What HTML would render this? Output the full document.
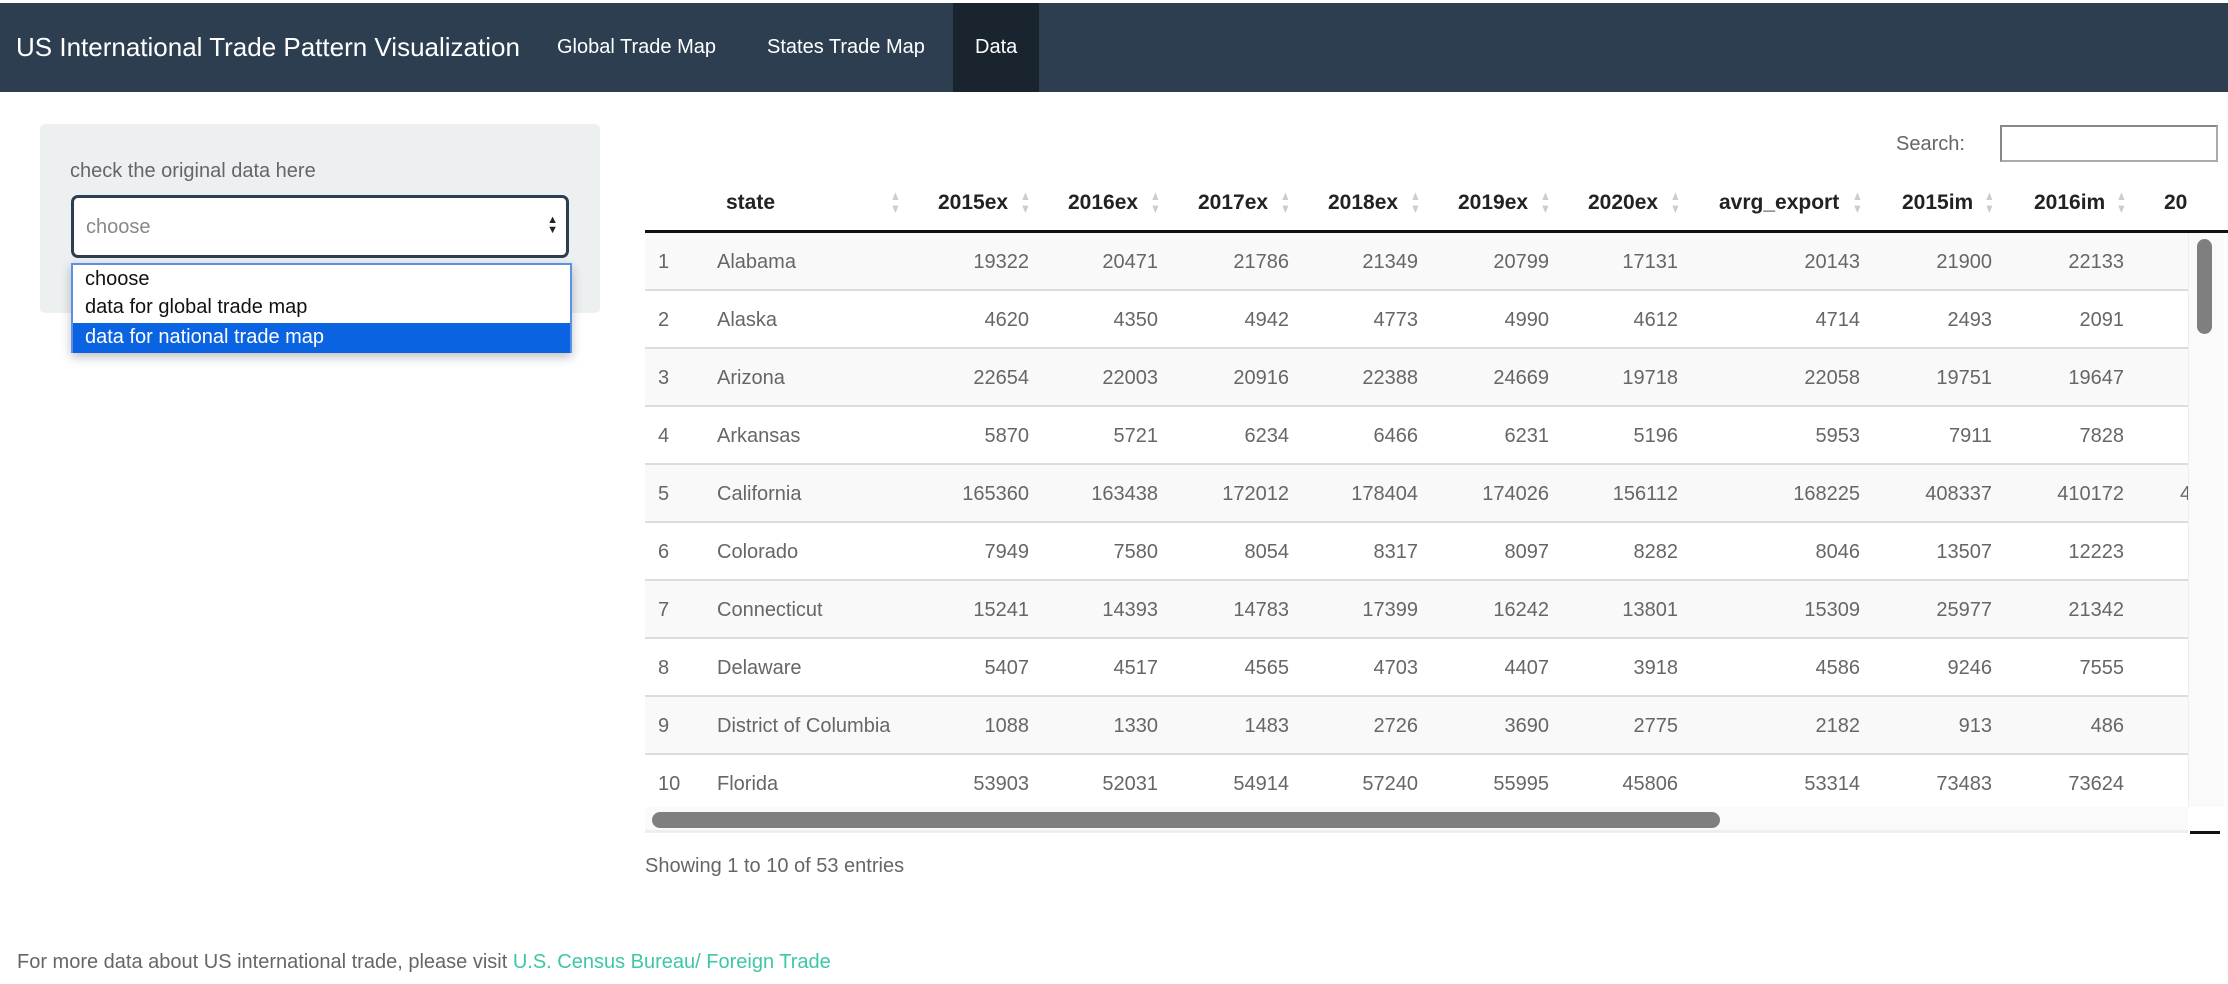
<!DOCTYPE html>
<html><head><meta charset="utf-8">
<style>
*{margin:0;padding:0;box-sizing:border-box}
body{width:2228px;height:984px;overflow:hidden;background:#fff;font-family:"Liberation Sans",sans-serif;color:#555;position:relative}
.nav{position:absolute;left:0;top:3px;width:2228px;height:89px;background:#2c3e50}
.nav span{position:absolute;top:0;line-height:89px;color:#fff}
.brand{left:16px;font-size:26px}
.nl{font-size:20px}
.act{background:#1a242f;padding:0 22px}
.well{position:absolute;left:40px;top:124px;width:560px;height:189px;background:#ecf0f1;border-radius:5px}
.lbl{position:absolute;left:70px;top:160px;font-size:20px;color:#666}
.sel{position:absolute;left:71px;top:195px;width:498px;height:63px;border:3px solid #2c3e50;border-radius:7px;background:#fff;font-size:20px;color:#888;padding:18px 0 0 12px}
.arr{position:absolute;right:8px;top:17px;font-size:11px;line-height:10px;color:#222}
.dd{position:absolute;left:71px;top:263px;width:501px;height:90px;border:2px solid #5c8fe6;background:#fff;box-shadow:0 4px 10px rgba(0,0,0,.25);font-size:20px;color:#111}
.dd div{height:28px;line-height:28px;padding-left:12px}
.dd .hl{background:#0a63e0;color:#fff;height:30px;margin-top:2px}
.search{position:absolute;left:1896px;top:133px;font-size:20px;color:#666}
.sinp{position:absolute;left:2000px;top:125px;width:218px;height:37px;border:2px solid #aaa;border-top-color:#888;border-left-color:#888;background:#fff}
.hdr{position:absolute;top:191px;font-size:21px;font-weight:bold;color:#222}
.sa{position:absolute;top:189px;font-size:13px;line-height:13px;color:#ccc;transform:scaleX(0.8)}
.hline{position:absolute;left:645px;top:230px;width:1583px;height:3px;background:#111}
.row{position:absolute;left:645px;width:1543px;height:58px;border-bottom:2px solid #ddd;font-size:20px;color:#666}
.row.o{background:#f9f9f9}
.row span{position:absolute;top:18px}
.r{text-align:right}
.vs{position:absolute;left:2188px;top:233px;width:36px;height:574px;background:#fafafa;border-left:1px solid #eee}
.vth{position:absolute;left:2197px;top:239px;width:15px;height:95px;background:#7f7f7f;border-radius:8px}
.hs{position:absolute;left:645px;top:807px;width:1543px;height:26px;background:#fafafa;border-bottom:3px solid #eee}
.hth{position:absolute;left:652px;top:812px;width:1068px;height:16px;background:#7f7f7f;border-radius:8px}
.info{position:absolute;left:645px;top:855px;font-size:20px;color:#666}
.foot{position:absolute;left:17px;top:951px;font-size:20px;color:#666}
.foot a{color:#3ec7a6;text-decoration:none}
</style></head><body>
<div class="nav">
<span class="brand">US International Trade Pattern Visualization</span>
<span class="nl" style="left:557px">Global Trade Map</span>
<span class="nl" style="left:767px">States Trade Map</span>
<span class="nl act" style="left:953px">Data</span>
</div>
<div class="well"></div>
<div class="lbl">check the original data here</div>
<div class="sel">choose<div class="arr">▲<br>▼</div></div>
<div class="dd"><div>choose</div><div>data for global trade map</div><div class="hl">data for national trade map</div></div>

<div class="search">Search:</div><div class="sinp"></div>

<div class="hdr" style="left:726px">state</div><div class="sa" style="left:889px">▲<br>▼</div>
<div class="hdr" style="left:938px">2015ex</div><div class="sa" style="left:1019px">▲<br>▼</div>
<div class="hdr" style="left:1068px">2016ex</div><div class="sa" style="left:1149px">▲<br>▼</div>
<div class="hdr" style="left:1198px">2017ex</div><div class="sa" style="left:1279px">▲<br>▼</div>
<div class="hdr" style="left:1328px">2018ex</div><div class="sa" style="left:1409px">▲<br>▼</div>
<div class="hdr" style="left:1458px">2019ex</div><div class="sa" style="left:1539px">▲<br>▼</div>
<div class="hdr" style="left:1588px">2020ex</div><div class="sa" style="left:1669px">▲<br>▼</div>
<div class="hdr" style="left:1719px">avrg_export</div><div class="sa" style="left:1851px">▲<br>▼</div>
<div class="hdr" style="left:1902px">2015im</div><div class="sa" style="left:1983px">▲<br>▼</div>
<div class="hdr" style="left:2034px">2016im</div><div class="sa" style="left:2115px">▲<br>▼</div>
<div style="position:absolute;left:2164px;top:191px;width:24px;overflow:hidden;font-size:21px;font-weight:bold;color:#222;white-space:nowrap">2017im</div>
<div class="hline"></div>

<div id="rows"></div>
<script>
var d=[["1","Alabama",19322,20471,21786,21349,20799,17131,20143,21900,22133],
["2","Alaska",4620,4350,4942,4773,4990,4612,4714,2493,2091],
["3","Arizona",22654,22003,20916,22388,24669,19718,22058,19751,19647],
["4","Arkansas",5870,5721,6234,6466,6231,5196,5953,7911,7828],
["5","California",165360,163438,172012,178404,174026,156112,168225,408337,410172],
["6","Colorado",7949,7580,8054,8317,8097,8282,8046,13507,12223],
["7","Connecticut",15241,14393,14783,17399,16242,13801,15309,25977,21342],
["8","Delaware",5407,4517,4565,4703,4407,3918,4586,9246,7555],
["9","District of Columbia",1088,1330,1483,2726,3690,2775,2182,913,486],
["10","Florida",53903,52031,54914,57240,55995,45806,53314,73483,73624]];
var rights=[1029,1158,1289,1418,1549,1678,1860,1992,2124];
var h="";
for(var i=0;i<10;i++){var r=d[i];var ty=233+i*58;
h+='<div class="row'+(i%2==0?' o':'')+'" style="top:'+ty+'px"><span style="left:13px">'+r[0]+'</span><span style="left:72px">'+r[1]+'</span>';
for(var j=0;j<9;j++){h+='<span class="r" style="right:'+(645+1543-rights[j])+'px">'+r[j+2]+'</span>';}
if(i==4)h+='<span style="left:1535px">4</span>';
h+='</div>';}
document.getElementById('rows').innerHTML=h;
</script>
<div class="vs"></div><div class="vth"></div>
<div class="hs"></div><div class="hth"></div>
<div style="position:absolute;left:2190px;top:831px;width:30px;height:3px;background:#111"></div>
<div class="info">Showing 1 to 10 of 53 entries</div>
<div class="foot">For more data about US international trade, please visit <a>U.S. Census Bureau/ Foreign Trade</a></div>
</body></html>
